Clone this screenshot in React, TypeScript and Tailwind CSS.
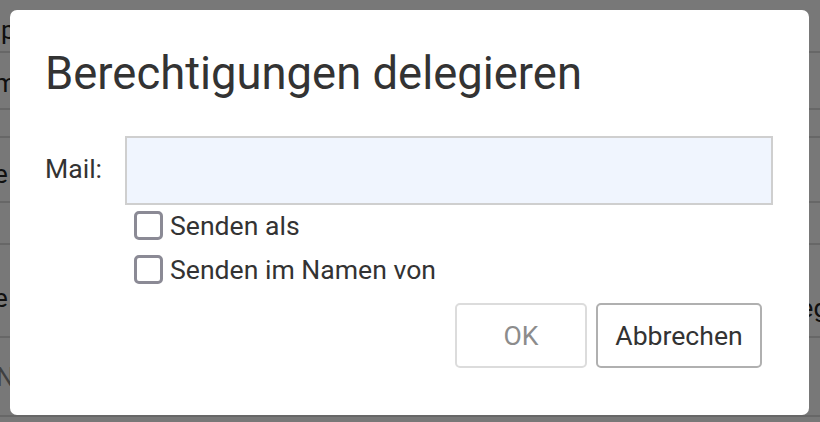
import React from "react";

const font = { fontFamily: "Roboto, 'Liberation Sans', sans-serif" };

function Checkbox({ label }: { label: string }) {
  return (
    <label className="flex items-center h-[29px]">
      <span className="block w-[29px] h-[29px] border-[3px] border-[#8b8a95] rounded-[5px] bg-white shrink-0" />
      <span className="ml-[7px] text-[26.6px] leading-[30px] text-[#333]">{label}</span>
    </label>
  );
}

export default function App() {
  return (
    <div className="relative w-[820px] h-[422px] overflow-hidden bg-white" style={font}>
      {/* background page */}
      <div className="flex flex-col text-[26px] leading-[30px] text-[#222]">
        <div className="h-[53px] border-b-2 border-[#dcdcdc] flex items-center pt-[8px] pl-[1px]">p</div>
        <div className="h-[57px] border-b-2 border-[#dcdcdc] flex items-center pt-[4px] -ml-[6px]">m</div>
        <div className="h-[28px] border-b-2 border-[#dcdcdc]" />
        <div className="h-[65px] border-b-2 border-[#dcdcdc] flex items-center pt-[8px] -ml-[6px]">e</div>
        <div className="h-[42px] border-b-2 border-[#dcdcdc]" />
        <div className="h-[93px] border-b-2 border-[#dcdcdc] flex items-start justify-between -ml-[6px]">
          <span className="mt-[38px]">e</span>
          <span className="mt-[48px] -mr-[8px]">eg</span>
        </div>
        <div className="h-[79px] border-b-2 border-[#dcdcdc] flex items-center text-[#888] -ml-[4px]">N</div>
        <div className="h-[40px]" />
      </div>

      {/* overlay */}
      <div className="absolute inset-0 bg-black/[0.53] pt-[10px] pl-[10px]">
        <div className="w-[799px] h-[405px] bg-white rounded-[7px] pl-[35px] pr-[36px] pt-[38px] flex flex-col">
          <h1 className="text-[45.4px] leading-[52px] text-[#333] font-normal">Berechtigungen delegieren</h1>

          <div className="mt-[36px] flex items-center">
            <span className="w-[80px] text-[26.6px] leading-[30px] text-[#333] -mt-[3px]">Mail:</span>
            <div className="flex-1 h-[69px] border-2 border-[#cfcfcf] bg-[#f0f5fe]" />
          </div>

          <div className="mt-[6px] pl-[89px] flex flex-col gap-[15px]">
            <Checkbox label="Senden als" />
            <Checkbox label="Senden im Namen von" />
          </div>

          <div className="mt-[19px] mr-[11px] flex justify-end gap-[9px]">
            <button className="w-[132px] h-[65px] border-2 border-[#dcdcdc] rounded-[5px] text-[26.6px] text-[#8c8c8c] bg-white">
              OK
            </button>
            <button className="w-[166px] h-[65px] border-2 border-[#b0b0b0] rounded-[5px] text-[26.6px] text-[#333] bg-white">
              Abbrechen
            </button>
          </div>
        </div>
      </div>
    </div>
  );
}
